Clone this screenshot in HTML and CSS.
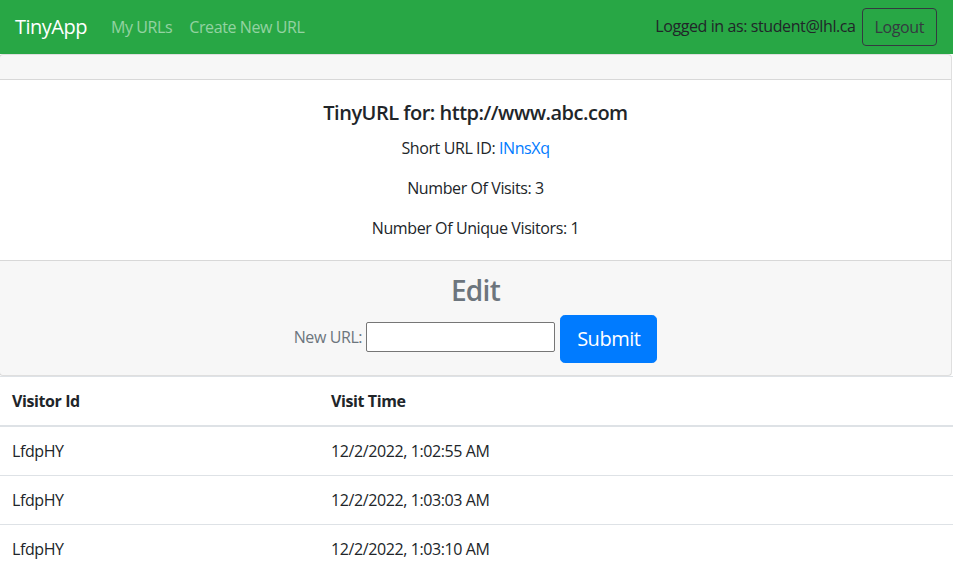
FILE: index.html
```html
<!DOCTYPE html>
<html>
<head>
<meta charset="utf-8">
<link rel="stylesheet" href="styles.css">
</head>
<body>
<nav class="navbar">
  <a class="brand" href="#">TinyApp</a>
  <a class="nav-link" href="#">My URLs</a>
  <a class="nav-link" href="#">Create New URL</a>
  <div class="nav-right">
    <span class="logged">Logged in as: student@lhl.ca</span>
    <button class="btn-logout">Logout</button>
  </div>
</nav>
<div class="card">
  <div class="card-header"></div>
  <div class="card-body">
    <h5 class="card-title">TinyURL for: http://www.abc.com</h5>
    <p class="card-text">Short URL ID: <a href="#" class="link">INnsXq</a></p>
    <p class="card-text">Number Of Visits: 3</p>
    <p class="card-text">Number Of Unique Visitors: 1</p>
  </div>
  <div class="card-footer">
    <h3 class="edit-title">Edit</h3>
    <form class="edit-form">
      <label class="edit-label">New URL:</label>
      <input class="edit-input" type="text">
      <button class="btn-submit" type="button">Submit</button>
    </form>
  </div>
</div>
<table class="table">
  <thead>
    <tr><th class="col-id">Visitor Id</th><th>Visit Time</th></tr>
  </thead>
  <tbody>
    <tr><td>LfdpHY</td><td>12/2/2022, 1:02:55 AM</td></tr>
    <tr><td>LfdpHY</td><td>12/2/2022, 1:03:03 AM</td></tr>
    <tr><td>LfdpHY</td><td>12/2/2022, 1:03:10 AM</td></tr>
  </tbody>
</table>
</body>
</html>
```

FILE: styles.css
```css
* { box-sizing: border-box; letter-spacing: -0.025em; }
body {
  margin: 0;
  font-family: "Open Sans", "Noto Sans", sans-serif;
  font-size: 16px;
  line-height: 1.5;
  color: #212529;
  background: #fff;
}
.navbar {
  display: flex;
  align-items: center;
  height: 54px;
  padding: 8px 16px;
  background: #28a745;
}
.brand {
  color: #fff;
  font-size: 20px;
  text-decoration: none;
  margin-right: 16px;
  margin-left: -1px;
  line-height: 30px;
}
.nav-link {
  color: rgba(255,255,255,.5);
  text-decoration: none;
  padding: 8px;
  line-height: 24px;
}
.nav-link + .nav-link { margin-left: 1px; }
.nav-right {
  margin-left: auto;
  display: flex;
  align-items: center;
}
.logged {
  color: #212529;
  margin-top: -3px;
}
.btn-logout {
  margin-left: 6px;
  height: 38px;
  padding: 6px 12px;
  font-family: inherit;
  font-size: 16px;
  line-height: 24px;
  color: #343a40;
  background: transparent;
  border: 1px solid #343a40;
  border-radius: 4px;
}
.card {
  margin: 0 1px 0 -1px;
  border: 1px solid rgba(0,0,0,.125);
  border-radius: 4px;
  background: #fff;
}
.card-header {
  height: 25px;
  background: rgba(0,0,0,.03);
  border-bottom: 1px solid rgba(0,0,0,.125);
}
.card-body {
  padding: 20px;
  text-align: center;
}
.card-title {
  margin: 1px 0 11px;
  font-size: 20px;
  font-weight: 600;
  line-height: 24px;
}
.card-text {
  margin: 0 0 16px;
}
.card-text:last-child { margin-bottom: 0; }
.link {
  color: #007bff;
  text-decoration: none;
}
.card-footer {
  padding: 12px 20px;
  background: rgba(0,0,0,.03);
  border-top: 1px solid rgba(0,0,0,.125);
  text-align: center;
  color: #6c757d;
}
.edit-title {
  margin: 0 0 8px;
  font-size: 28px;
  font-weight: 600;
  line-height: 34px;
}
.edit-form {
  display: flex;
  justify-content: center;
  align-items: flex-start;
}
.edit-label {
  margin-top: 10px;
  margin-right: 4px;
}
.edit-input {
  width: 189px;
  height: 30px;
  margin-top: 7px;
  margin-right: 5px;
  border: 1px solid #767676;
  border-radius: 2px;
  background: #fff;
}
.btn-submit {
  height: 48px;
  padding: 8px 16px;
  font-family: inherit;
  font-size: 20px;
  line-height: 30px;
  color: #fff;
  background: #007bff;
  border: 1px solid #007bff;
  border-radius: 4.8px;
}
.table {
  width: 100%;
  border-collapse: collapse;
}
.table th, .table td {
  text-align: left;
  padding: 12px;
  border-top: 1px solid #dee2e6;
  line-height: 24px;
}
.table thead th {
  border-bottom: 2px solid #dee2e6;
  font-weight: 700;
}
.col-id { width: 319px; }
```
